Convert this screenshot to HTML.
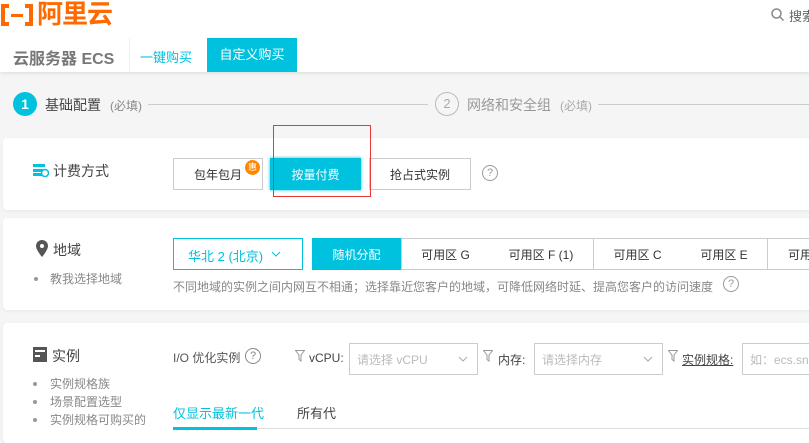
<!DOCTYPE html>
<html><head><meta charset="utf-8"><style>
*{margin:0;padding:0;box-sizing:border-box}
body{width:809px;height:432px;overflow:hidden;background:#f5f5f5;font-family:"Liberation Sans","Noto Sans CJK SC",sans-serif;position:relative;color:#333}
.a{position:absolute;white-space:nowrap}
.card{position:absolute;left:3px;width:820px;background:#fff;border-radius:4px;box-shadow:0 1px 3px rgba(0,0,0,.06)}
.btn{position:absolute;border:1px solid #ccc;background:#fff;font-size:12px;color:#333;text-align:center;display:flex;align-items:center;justify-content:center}
.teal{background:#00c1de;color:#fff;border-color:#00c1de}
.g{color:#888;font-size:12px}
.dot{position:absolute;width:4px;height:4px;border-radius:2px;background:#999}
</style></head><body>
<div class="a" style="left:0;top:0;width:809px;height:38px;background:#fff"></div>
<svg class="a" style="left:0;top:4px" width="34" height="22" viewBox="0 0 34 22"><path d="M9 2H3v18h6M25 2h6v18h-6" stroke="#ff6a00" stroke-width="4" fill="none"/><rect x="11" y="10" width="12" height="3" fill="#ff6a00"/></svg>
<div class="a" style="left:37px;top:-2px;font-size:26px;font-weight:bold;color:#ff6a00;line-height:32px;letter-spacing:-1px">阿里云</div>
<svg class="a" style="left:771px;top:8px" width="13" height="13"><circle cx="5.5" cy="5.5" r="4.5" stroke="#888" stroke-width="1.5" fill="none"/><path d="M9 9l3.5 3.5" stroke="#888" stroke-width="1.5"/></svg>
<div class="a" style="left:789px;top:6px;font-size:13px;color:#666">搜索</div>
<div class="a" style="left:0;top:38px;width:809px;height:34px;background:#fff;box-shadow:0 2px 3px rgba(0,0,0,.08)"></div>
<div class="a" style="left:13px;top:45px;font-size:16px;font-weight:bold;color:#777">云服务器 ECS</div>
<div class="a" style="left:129px;top:38px;width:1px;height:34px;background:#eee"></div>
<div class="a" style="left:140px;top:47px;font-size:13px;color:#00c1de">一键购买</div>
<div class="a" style="left:207px;top:38px;width:90px;height:34px;background:#00c1de;color:#fff;font-size:13px;line-height:34px;text-align:center">自定义购买</div>

<div class="a" style="left:13px;top:92px;width:24px;height:24px;border-radius:12px;background:#00c1de;color:#fff;font-size:14px;font-weight:bold;text-align:center;line-height:24px">1</div>
<div class="a" style="left:45px;top:95px;font-size:14px;color:#444">基础配置</div>
<div class="a g" style="left:110px;top:97px">(必填)</div>
<div class="a" style="left:148px;top:104px;width:280px;height:1px;background:#ccc"></div>
<div class="a" style="left:435px;top:92px;width:24px;height:24px;border-radius:12px;border:1px solid #bbb;color:#aaa;font-size:13px;text-align:center;line-height:22px">2</div>
<div class="a" style="left:467px;top:95px;font-size:14px;color:#999">网络和安全组</div>
<div class="a g" style="left:560px;top:97px;color:#aaa">(必填)</div>
<div class="a" style="left:598px;top:104px;width:211px;height:1px;background:#ccc"></div>

<div class="card" style="top:138px;height:72px"></div>
<svg class="a" style="left:33px;top:163px" width="16" height="14"><rect x="0" y="1" width="12" height="3" fill="#00c1de"/><rect x="0" y="6" width="10" height="3" fill="#00c1de"/><rect x="0" y="10" width="9" height="3" fill="#00c1de"/><circle cx="12" cy="10" r="3.5" fill="#fff" stroke="#00c1de" stroke-width="1.5"/></svg>
<div class="a" style="left:53px;top:161px;font-size:14px;color:#444">计费方式</div>
<div class="btn" style="left:173px;top:158px;width:90px;height:32px">包年包月</div>
<div class="a" style="left:245px;top:160px;width:15px;height:15px;border-radius:8px;background:#f80;color:#fff;font-size:9px;text-align:center;line-height:15px">惠</div>
<div class="btn teal" style="left:270px;top:158px;width:91px;height:32px;box-shadow:0 0 3px #00c1de">按量付费</div>
<div class="btn" style="left:369px;top:158px;width:102px;height:32px">抢占式实例</div>
<div class="a" style="left:482px;top:165px;width:16px;height:16px;border-radius:8px;border:1px solid #999;color:#999;font-size:11px;text-align:center;line-height:14px">?</div>
<svg class="a" style="left:273px;top:125px" width="98" height="72"><rect x="0.5" y="0.5" width="97" height="71" fill="none" stroke="#e8383d" stroke-width="1"/></svg>

<div class="card" style="top:218px;height:92px"></div>
<svg class="a" style="left:36px;top:240px" width="12" height="17"><path d="M6 0a6 6 0 0 0-6 6c0 4 6 11 6 11s6-7 6-11a6 6 0 0 0-6-6z" fill="#555"/><circle cx="6" cy="6" r="2" fill="#fff"/></svg>
<div class="a" style="left:53px;top:240px;font-size:14px;color:#444">地域</div>
<div class="dot" style="left:34px;top:277px"></div>
<div class="a g" style="left:50px;top:270px">教我选择地域</div>
<div class="a" style="left:173px;top:238px;width:130px;height:32px;border:1px solid #00c1de"></div>
<div class="a" style="left:188px;top:246px;font-size:13px;color:#00c1de">华北 2 (北京)</div>
<svg class="a" style="left:271px;top:251px" width="10" height="6"><path d="M1 1l4 4 4-4" stroke="#00c1de" fill="none"/></svg>
<div class="btn teal" style="left:312px;top:238px;width:89px;height:32px">随机分配</div>
<div class="btn" style="left:401px;top:238px;width:89px;height:32px">可用区 G</div>
<div class="btn" style="left:489px;top:238px;width:105px;height:32px;border-left:none">可用区 F (1)</div>
<div class="btn" style="left:593px;top:238px;width:89px;height:32px">可用区 C</div>
<div class="btn" style="left:681px;top:238px;width:87px;height:32px;border-left:none">可用区 E</div>
<div class="btn" style="left:767px;top:238px;width:60px;height:32px;justify-content:flex-start;padding-left:20px">可用区</div>
<div class="a g" style="left:173px;top:278px">不同地域的实例之间内网互不相通；选择靠近您客户的地域，可降低网络时延、提高您客户的访问速度</div>
<div class="a" style="left:723px;top:276px;width:16px;height:16px;border-radius:8px;border:1px solid #999;color:#999;font-size:11px;text-align:center;line-height:14px">?</div>

<div class="card" style="top:323px;height:120px"></div>
<svg class="a" style="left:33px;top:347px" width="14" height="15"><rect width="14" height="15" fill="#555"/><rect x="2" y="3" width="10" height="2" fill="#fff"/><rect x="2" y="8" width="5" height="2" fill="#fff"/></svg>
<div class="a" style="left:52px;top:346px;font-size:14px;color:#444">实例</div>
<div class="dot" style="left:33px;top:382px"></div><div class="a g" style="left:50px;top:375px">实例规格族</div>
<div class="dot" style="left:33px;top:400px"></div><div class="a g" style="left:50px;top:393px">场景配置选型</div>
<div class="dot" style="left:33px;top:418px"></div><div class="a g" style="left:50px;top:411px">实例规格可购买的</div>
<div class="a" style="left:173px;top:349px;font-size:12px;color:#555">I/O 优化实例</div>
<div class="a" style="left:245px;top:348px;width:16px;height:16px;border-radius:8px;border:1px solid #888;color:#888;font-size:11px;text-align:center;line-height:14px">?</div>
<svg class="a" style="left:295px;top:350px" width="10" height="12"><path d="M0.5 0.5h9L6 5v6L4 9.5V5z" stroke="#999" fill="none"/></svg>
<div class="a" style="left:309px;top:351px;font-size:12px;color:#444">vCPU:</div>
<div class="a" style="left:349px;top:343px;width:129px;height:32px;border:1px solid #ccc"></div>
<div class="a" style="left:357px;top:351px;font-size:12px;color:#bbb">请选择 vCPU</div>
<svg class="a" style="left:458px;top:356px" width="10" height="6"><path d="M1 1l4 4 4-4" stroke="#aaa" fill="none"/></svg>
<svg class="a" style="left:483px;top:350px" width="10" height="12"><path d="M0.5 0.5h9L6 5v6L4 9.5V5z" stroke="#999" fill="none"/></svg>
<div class="a" style="left:498px;top:351px;font-size:12px;color:#444">内存:</div>
<div class="a" style="left:534px;top:343px;width:129px;height:32px;border:1px solid #ccc"></div>
<div class="a" style="left:542px;top:351px;font-size:12px;color:#bbb">请选择内存</div>
<svg class="a" style="left:643px;top:356px" width="10" height="6"><path d="M1 1l4 4 4-4" stroke="#aaa" fill="none"/></svg>
<svg class="a" style="left:668px;top:350px" width="10" height="12"><path d="M0.5 0.5h9L6 5v6L4 9.5V5z" stroke="#999" fill="none"/></svg>
<div class="a" style="left:682px;top:351px;font-size:12px;color:#444;text-decoration:underline">实例规格:</div>
<div class="a" style="left:742px;top:343px;width:80px;height:32px;border:1px solid #ccc"></div>
<div class="a" style="left:750px;top:351px;font-size:12px;color:#bbb">如：ecs.sn1</div>
<div class="a" style="left:173px;top:403px;font-size:13px;color:#00c1de">仅显示最新一代</div>
<div class="a" style="left:297px;top:403px;font-size:13px;color:#444">所有代</div>
<div class="a" style="left:173px;top:428px;width:640px;height:1px;background:#ddd"></div>
<div class="a" style="left:173px;top:427px;width:84px;height:3px;background:#00c1de"></div>
</body></html>
